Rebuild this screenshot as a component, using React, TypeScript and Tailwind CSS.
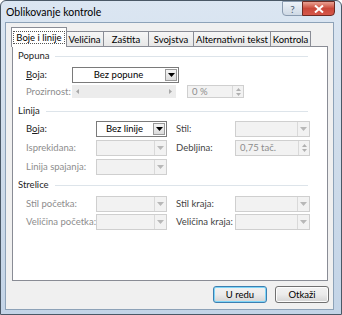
import React from "react";

const FONT = { fontFamily: 'Lato, "Noto Sans", sans-serif' };

function Arrow({ disabled }: { disabled?: boolean }) {
  return (
    <svg width="7" height="4" viewBox="0 0 7 4">
      <path d="M0 0H7L3.5 4Z" fill={disabled ? "#b8b8b8" : "#000"} />
    </svg>
  );
}

function Combo({ text, disabled, w }: { text?: string; disabled?: boolean; w: string }) {
  if (disabled) {
    return (
      <div className={`${w} h-[16px] flex border border-[#cfcfcf] bg-[#f2f2f2]`}>
        <div className="flex-1" />
        <div className="w-[12px] border-l border-[#d9d9d9] flex items-center justify-center">
          <Arrow disabled />
        </div>
      </div>
    );
  }
  return (
    <div className={`${w} h-[16px] flex border border-[#7a7a7a] bg-white`}>
      <div className="flex-1 flex items-center justify-center text-black leading-none">{text}</div>
      <div className="w-[12px] m-[1px] border border-[#9a9a9a] bg-gradient-to-b from-[#f4f4f4] to-[#dcdcdc] flex items-center justify-center">
        <Arrow />
      </div>
    </div>
  );
}

function Spin({ text, w }: { text: string; w: string }) {
  return (
    <div className={`${w} flex border border-[#cfcfcf] bg-[#f2f2f2]`}>
      <div className="flex-1 flex items-center pl-[4px] text-[#8d8d8d] leading-none">{text}</div>
      <div className="w-[11px] border-l border-[#d9d9d9] flex flex-col items-center justify-center gap-[2px]">
        <svg width="5" height="3" viewBox="0 0 5 3"><path d="M0 3H5L2.5 0Z" fill="#b0b0b0" /></svg>
        <svg width="5" height="3" viewBox="0 0 5 3"><path d="M0 0H5L2.5 3Z" fill="#b0b0b0" /></svg>
      </div>
    </div>
  );
}

function Heading({ text, mt }: { text: string; mt: string }) {
  return (
    <div className={`${mt} h-[14px] flex items-center pl-[5px] pr-[19px]`}>
      <span className="text-[#1e1e1e] leading-none">{text}</span>
      <div className="flex-1 h-px bg-[#dde4ea] ml-[6px]" />
    </div>
  );
}

function Label({ children, disabled, dim, w }: { children: React.ReactNode; disabled?: boolean; dim?: boolean; w: string }) {
  const color = disabled ? "text-[#8d8d8d]" : dim ? "text-[#444444]" : "text-[#1e1e1e]";
  return <div className={`${w} shrink-0 leading-none ${color}`}>{children}</div>;
}

function Tab({ label, selected, w }: { label: string; selected?: boolean; w: string }) {
  if (selected) {
    return (
      <div className={`${w} h-[20px] -mr-px bg-white border border-b-0 border-[#898c95] flex items-center justify-center relative z-10`}>
        <span className="px-[2px] py-[1px] outline-1 outline-dotted outline-[#555] leading-none">{label}</span>
      </div>
    );
  }
  return (
    <div className={`${w} h-[16px] mt-[4px] -ml-px border border-b-0 border-[#898c95] bg-gradient-to-b from-[#f6f6f6] to-[#e6e6e6] flex items-center justify-center leading-none`}>
      {label}
    </div>
  );
}

export default function App() {
  return (
    <div className="w-[342px] h-[315px] text-[9.5px] text-black overflow-hidden whitespace-nowrap" style={FONT}>
      <div className="w-[342px] h-[315px] border border-[#4a5866] rounded-t-[6px] bg-gradient-to-b from-[#dbe6f2] via-[#cfdcea] to-[#c3d4e7] flex flex-col">
        {/* Title bar */}
        <div className="h-[21px] flex items-start">
          <div className="pl-[5px] pt-[6px] text-[10.5px] leading-none text-black">Oblikovanje kontrole</div>
          <div className="flex-1" />
          <div className="flex mr-[6px]">
            <div className="w-[21px] h-[15px] border border-[#8a9bb0] rounded-bl-[4px] bg-gradient-to-b from-[#edf2f8] to-[#cfd9e5] flex items-center justify-center text-[10px] leading-none text-[#4f5f73]">
              ?
            </div>
            <div className="w-[33px] h-[15px] -ml-px border border-[#6d2a22] rounded-br-[4px] bg-gradient-to-b from-[#e8a092] via-[#c9483a] to-[#d6574a] flex items-center justify-center">
              <svg width="10" height="8" viewBox="0 0 10 8">
                <path d="M1 0.5L9 7.5M9 0.5L1 7.5" stroke="#fff" strokeWidth="2" />
              </svg>
            </div>
          </div>
        </div>
        {/* Client */}
        <div className="ml-[4px] mr-[7px] mb-[4px] flex-1 border border-[#8da2b8] bg-[#f0f0f0] flex flex-col pt-[4px] px-[5px]">
          <div className="flex h-[20px] items-start pl-0">
            <Tab label="Boje i linije" selected w="w-[56px]" />
            <Tab label="Veličina" w="w-[39px]" />
            <Tab label="Zaštita" w="w-[46px]" />
            <Tab label="Svojstva" w="w-[46px]" />
            <Tab label="Alternativni tekst" w="w-[78px]" />
            <Tab label="Kontrola" w="w-[41px]" />
          </div>
          <div className="-mt-px h-[235px] ml-px mr-0 border border-[#898c95] bg-white flex flex-col">
            <Heading text="Popuna" mt="mt-[2px]" />
            <div className="mt-[4px] h-[15px] flex items-center pl-[13px]">
              <Label w="w-[46px]"><u>B</u>oja:</Label>
              <Combo text="Bez popune" w="w-[107px]" />
            </div>
            <div className="mt-[3px] h-[13px] flex items-center pl-[13px]">
              <Label w="w-[46px]" disabled>Prozirnost:</Label>
              <div className="w-[104px] h-[13px] bg-[#ececec] flex items-center justify-between px-[4px]">
                <svg width="3" height="5" viewBox="0 0 3 5"><path d="M3 0V5L0 2.5Z" fill="#a8a8a8" /></svg>
                <svg width="3" height="5" viewBox="0 0 3 5"><path d="M0 0V5L3 2.5Z" fill="#a8a8a8" /></svg>
              </div>
              <div className="w-[11px]" />
              <Spin text="0 %" w="w-[57px] h-[13px]" />
            </div>
            <Heading text="Linija" mt="mt-[6px]" />
            <div className="mt-[3px] h-[16px] flex items-center pl-[13px]">
              <Label w="w-[70px]">B<u>o</u>ja:</Label>
              <Combo text="Bez linije" w="w-[71px]" />
              <div className="w-[9px]" />
              <Label w="w-[59px]" dim>Stil:</Label>
              <Combo disabled w="w-[75px]" />
            </div>
            <div className="mt-[3px] h-[16px] flex items-center pl-[13px]">
              <Label w="w-[70px]" disabled>Isprekidana:</Label>
              <Combo disabled w="w-[71px]" />
              <div className="w-[9px]" />
              <Label w="w-[59px]" dim>Debljina:</Label>
              <Spin text="0,75 tač." w="w-[75px] h-[16px]" />
            </div>
            <div className="mt-[3px] h-[16px] flex items-center pl-[13px]">
              <Label w="w-[70px]" disabled>Linija spajanja:</Label>
              <Combo disabled w="w-[71px]" />
            </div>
            <Heading text="Strelice" mt="mt-[3px]" />
            <div className="mt-[4px] h-[16px] flex items-center pl-[13px]">
              <Label w="w-[70px]" disabled>Stil početka:</Label>
              <Combo disabled w="w-[71px]" />
              <div className="w-[9px]" />
              <Label w="w-[59px]" dim>Stil kraja:</Label>
              <Combo disabled w="w-[75px]" />
            </div>
            <div className="mt-[2px] h-[16px] flex items-center pl-[13px]">
              <Label w="w-[70px]" disabled>Veličina početka:</Label>
              <Combo disabled w="w-[71px]" />
              <div className="w-[9px]" />
              <Label w="w-[59px]" dim>Veličina kraja:</Label>
              <Combo disabled w="w-[75px]" />
            </div>
          </div>
          <div className="flex justify-end gap-[8px] mt-[5px] mr-[-1px]">
            <div className="w-[54px] h-[17px] rounded-[3px] border border-[#3c7fb1] shadow-[inset_0_0_0_1px_#7fd5f7] bg-gradient-to-b from-[#f2f2f2] via-[#ebebeb] to-[#d4d4d4] flex items-center justify-center leading-none">
              U redu
            </div>
            <div className="w-[54px] h-[17px] rounded-[3px] border border-[#707070] shadow-[inset_0_0_0_1px_#fcfcfc] bg-gradient-to-b from-[#f2f2f2] via-[#ebebeb] to-[#d4d4d4] flex items-center justify-center leading-none">
              Otkaži
            </div>
          </div>
        </div>
      </div>
    </div>
  );
}
